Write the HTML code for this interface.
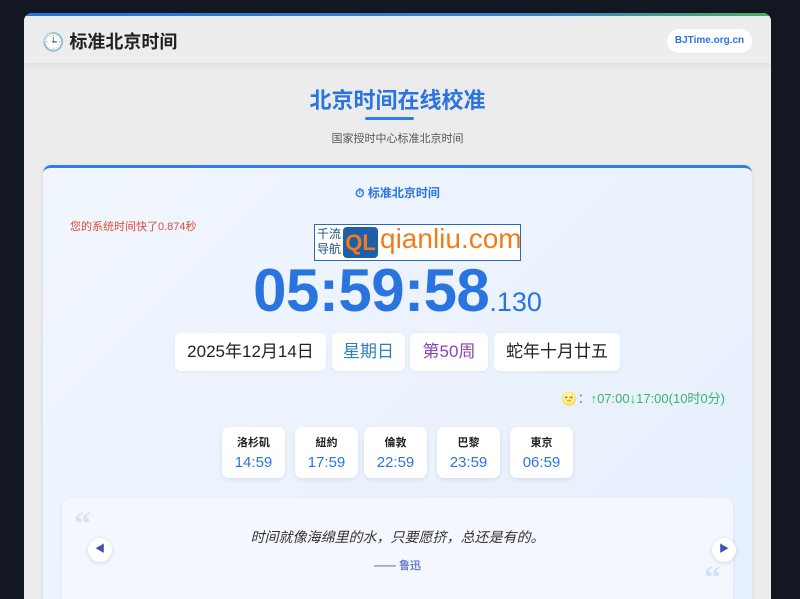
<!DOCTYPE html>
<html><head><meta charset="utf-8"><style>
*{margin:0;padding:0;box-sizing:border-box}
html,body{width:800px;height:599px;overflow:hidden}
body{background:#131722;font-family:"Liberation Sans","Noto Sans CJK SC",sans-serif;position:relative}
.outer{position:absolute;left:24px;top:13px;width:747px;height:586px;background:#ececec;border-radius:8px 8px 0 0;overflow:hidden}
.topbar{height:3px;background:linear-gradient(90deg,#2a74e0,#3c86c8 70%,#4caf60)}
.hdr{height:47px;background:#ededed;box-shadow:0 2px 6px rgba(0,0,0,.08);position:relative}
.hdr .t{position:absolute;left:18px;top:12px;font-size:18px;font-weight:bold;color:#222}
.badge{position:absolute;right:19px;top:13px;height:24px;width:85px;background:#fff;border-radius:12px;color:#2a74e0;font-size:10px;font-weight:bold;text-align:center;line-height:24px}
.abs{position:absolute}
.inner{position:absolute;left:19px;top:152px;width:709px;height:434px;border-radius:8px 8px 0 0;background:linear-gradient(135deg,#f1f6fe,#e6effd);border-top:3px solid #2f7de6;box-shadow:0 2px 6px rgba(0,0,0,.08);overflow:hidden}
.box{position:absolute;top:165px;height:38px;background:#fff;border-radius:6px;font-size:17px;line-height:38px;text-align:center;box-shadow:0 1px 3px rgba(0,0,0,.06)}
.city{position:absolute;top:259px;width:63px;height:51px;background:#fff;border-radius:7px;text-align:center;box-shadow:0 2px 5px rgba(0,0,0,.08)}
.city .n{font-size:11px;color:#222;margin-top:7px;font-weight:bold}
.city .v{font-size:15px;color:#2a74e0;margin-top:4px}
.quote{position:absolute;left:19px;top:330px;width:671px;height:110px;background:#f4f7fe;border-radius:9px 9px 0 0;box-shadow:0 1px 4px rgba(0,0,0,.05)}
.arr{position:absolute;width:24px;height:24px;border-radius:50%;background:#fff;box-shadow:0 1px 4px rgba(0,0,0,.15);color:#3f51b5;font-size:10px;line-height:24px;text-align:center}
</style></head><body>
<div class="outer">
<div class="topbar"></div>
<div class="hdr"><div class="t">🕒 标准北京时间</div><div class="badge">BJTime.org.cn</div></div>
<div class="abs" style="left:0;width:747px;top:70px;text-align:center;font-size:22px;font-weight:bold;color:#2a74e0">北京时间在线校准</div>
<div class="abs" style="left:341px;top:104px;width:49px;height:3px;background:#2f7de6;border-radius:2px"></div>
<div class="abs" style="left:0;width:747px;top:117px;text-align:center;font-size:11px;color:#555">国家授时中心标准北京时间</div>
<div class="inner">
<div class="abs" style="left:0;width:709px;top:16px;text-align:center;font-size:12px;font-weight:bold;color:#2a74e0">⏱ 标准北京时间</div>
<div class="abs" style="left:27px;top:50px;font-size:11px;color:#e04a3a">您的系统时间快了0.874秒</div>
<div class="abs" style="left:271px;top:56px;width:207px;height:37px;border:1.5px solid #2b6cb0;background:#fff;overflow:hidden">
 <div class="abs" style="left:2px;top:2px;font-size:12px;line-height:15px;color:#1d4e89">千流<br>导航</div>
 <div class="abs" style="left:28px;top:2px;width:35px;height:31px;background:#1f5fa8;border-radius:4px;color:#f07c1c;font-size:22px;font-weight:bold;line-height:31px;text-align:center">QL</div>
 <div class="abs" style="left:65px;top:-2px;font-size:28px;color:#f07c1c">qianliu.com</div>
</div>
<div class="abs" style="left:0;width:709px;top:88px;text-align:center;color:#2a74e0;font-weight:bold"><span style="font-size:60px;letter-spacing:-0.5px">05:59:58</span><span style="font-size:27px;font-weight:normal">.130</span></div>
<div class="box" style="left:132px;width:151px;color:#222">2025年12月14日</div>
<div class="box" style="left:289px;width:73px;color:#2d7fbf">星期日</div>
<div class="box" style="left:367px;width:78px;color:#8e44ad">第50周</div>
<div class="box" style="left:451px;width:126px;color:#222">蛇年十月廿五</div>
<div class="abs" style="right:27px;top:220px;font-size:13px;color:#3bb36a">🌝：↑07:00↓17:00(10时0分)</div>
<div class="city" style="left:179px"><div class="n">洛杉矶</div><div class="v">14:59</div></div>
<div class="city" style="left:252px"><div class="n">紐約</div><div class="v">17:59</div></div>
<div class="city" style="left:321px"><div class="n">倫敦</div><div class="v">22:59</div></div>
<div class="city" style="left:394px"><div class="n">巴黎</div><div class="v">23:59</div></div>
<div class="city" style="left:467px"><div class="n">東京</div><div class="v">06:59</div></div>
<div class="quote">
 <div class="abs" style="left:12px;top:8px;font-size:34px;color:#d6e2f7;font-family:'Liberation Serif',serif;font-weight:bold">“</div>
 <div class="abs" style="right:12px;top:62px;font-size:34px;color:#d6e2f7;font-family:'Liberation Serif',serif;font-weight:bold">“</div>
 <div class="abs" style="left:0;width:671px;top:29px;text-align:center;font-size:14px;font-style:italic;color:#333">时间就像海绵里的水，只要愿挤，总还是有的。</div>
 <div class="abs" style="left:0;width:671px;top:59px;text-align:center;font-size:11px;font-weight:bold;color:#6a7fc8">—— 鲁迅</div>
 <div class="arr" style="left:26px;top:40px">◀</div>
 <div class="arr" style="left:650px;top:40px">▶</div>
</div>
</div>
</div>
</body></html>
